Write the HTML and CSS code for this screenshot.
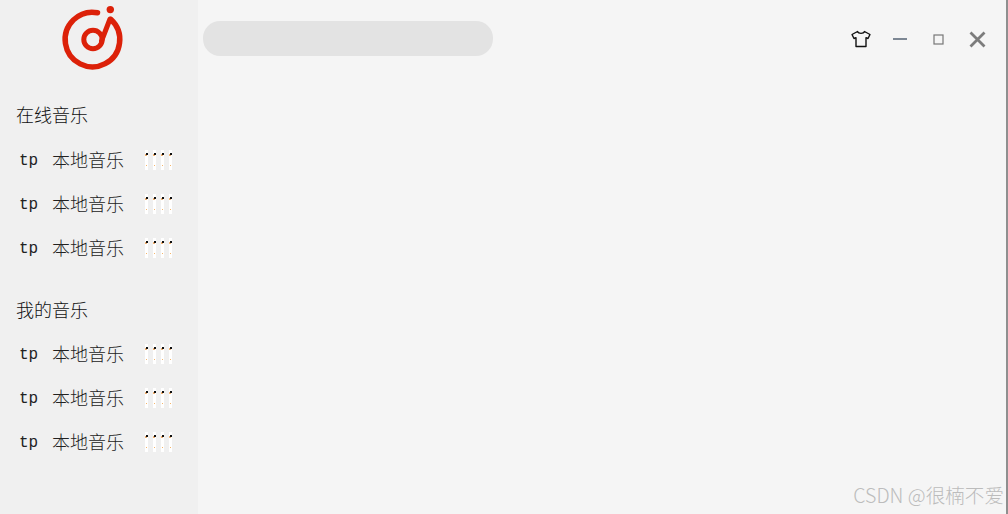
FILE: index.html
```html
<!DOCTYPE html>
<html lang="en">
<head>
  <meta charset="UTF-8">
  <meta name="viewport" content="width=device-width, initial-scale=1.0">
  <title>音乐</title>
  <link rel="stylesheet" href="styles.css">
</head>
<body>

  <div class="sidebar">
    <div class="logo">
      <svg width="70" height="76" viewBox="57 0 70 76">
        <path d="M96.5 12.7A27.3 27.3 0 1 0 110 19.5" fill="none" stroke="#dc2109" stroke-width="5.5" stroke-linecap="round"/>
        <circle cx="92" cy="39.5" r="9.2" fill="none" stroke="#dc2109" stroke-width="5"/>
        <path d="M100.5 41L109 19" fill="none" stroke="#dc2109" stroke-width="5" stroke-linecap="round"/>
        <circle cx="109.3" cy="9.6" r="3.7" fill="#dc2109"/>
      </svg>
    </div>

    <div class="group">
      <h4>在线音乐</h4>
      <div class="item"><span class="tag">tp</span><span class="name">本地音乐</span><span class="bars"><i></i><i></i><i></i><i></i></span></div>
      <div class="item"><span class="tag">tp</span><span class="name">本地音乐</span><span class="bars"><i></i><i></i><i></i><i></i></span></div>
      <div class="item"><span class="tag">tp</span><span class="name">本地音乐</span><span class="bars"><i></i><i></i><i></i><i></i></span></div>
    </div>

    <div class="group">
      <h4>我的音乐</h4>
      <div class="item"><span class="tag">tp</span><span class="name">本地音乐</span><span class="bars"><i></i><i></i><i></i><i></i></span></div>
      <div class="item"><span class="tag">tp</span><span class="name">本地音乐</span><span class="bars"><i></i><i></i><i></i><i></i></span></div>
      <div class="item"><span class="tag">tp</span><span class="name">本地音乐</span><span class="bars"><i></i><i></i><i></i><i></i></span></div>
    </div>
  </div>

  <div class="main">
    <div class="topbar">
      <div class="search"></div>
      <div class="controls">
        <div class="ctrl">
          <svg width="20" height="18" viewBox="0 0 20 18">
            <path d="M6.5 1.5L1 4.5L3 8.5L5 7.7V16.5H15V7.7L17 8.5L19 4.5L13.5 1.5C12.5 4 7.5 4 6.5 1.5Z" fill="none" stroke="#111" stroke-width="1.4" stroke-linejoin="round"/>
          </svg>
        </div>
        <div class="ctrl">
          <svg width="14" height="14" viewBox="0 0 14 14">
            <path d="M0 7H14" stroke="#7d8794" stroke-width="2"/>
          </svg>
        </div>
        <div class="ctrl">
          <svg width="11" height="11" viewBox="0 0 11 11">
            <rect x="1" y="1" width="9" height="9" fill="none" stroke="#777" stroke-width="1.2"/>
          </svg>
        </div>
        <div class="ctrl">
          <svg width="17" height="17" viewBox="0 0 17 17">
            <path d="M1.5 1.5L15.5 15.5M15.5 1.5L1.5 15.5" stroke="#7c7c7c" stroke-width="2.8"/>
          </svg>
        </div>
      </div>
    </div>
  </div>

  <div class="watermark">CSDN @很楠不爱</div>

</body>
</html>
```

FILE: styles.css
```css
body {
  margin: 0;
  display: flex;
  height: 514px;
  overflow: hidden;
  background: #f5f5f5;
  font-family: 'Noto Sans CJK SC', sans-serif;
  color: #333;
}
.sidebar {
  width: 198px;
  flex-shrink: 0;
  background: #f0f0f0;
}
.logo {
  height: 92px;
  display: flex;
  justify-content: center;
}
.logo svg {
  display: block;
  margin-left: -13px;
}
.group {
  margin-bottom: 18px;
}
.group h4 {
  margin: 0 0 1px;
  height: 44px;
  line-height: 44px;
  padding-left: 16px;
  font-size: 18px;
  font-weight: 300;
  color: #111;
}
.group + .group h4 {
  margin-bottom: 0;
}
.item {
  display: flex;
  align-items: center;
  height: 44px;
  padding-left: 19px;
}
.tag {
  width: 33px;
  padding-top: 3px;
  font-family: 'Liberation Mono', monospace;
  font-size: 16px;
  color: #222;
}
.name {
  width: 93px;
  font-size: 18px;
  font-weight: 300;
  color: #222;
}
.bars {
  display: flex;
  gap: 5px;
  padding-top: 1px;
}
.bars i {
  display: block;
  position: relative;
  width: 3px;
  height: 20px;
  background: #fff;
}
.bars i::before {
  content: "";
  position: absolute;
  top: 3px;
  right: 0;
  width: 2px;
  height: 2px;
  background: #111;
  box-shadow: -1px 1px 0 #f0b070;
}
.bars i::after {
  content: "";
  position: absolute;
  top: 15px;
  left: 1px;
  width: 1px;
  height: 1px;
  background: #f5b56a;
}
.main {
  flex: 1;
  border-right: 2px solid #8f8f8f;
}
.topbar {
  display: flex;
  align-items: center;
  justify-content: space-between;
  height: 77px;
  padding-left: 5px;
  padding-right: 9px;
}
.search {
  width: 290px;
  height: 35px;
  border-radius: 17px;
  background: #e3e3e3;
}
.controls {
  display: flex;
  padding-top: 1px;
}
.ctrl {
  width: 39px;
  display: flex;
  align-items: center;
  justify-content: center;
}
.watermark {
  position: absolute;
  right: 4px;
  bottom: 5px;
  font-size: 19.6px;
  font-weight: 300;
  color: #bcbcbc;
  white-space: nowrap;
}
```
